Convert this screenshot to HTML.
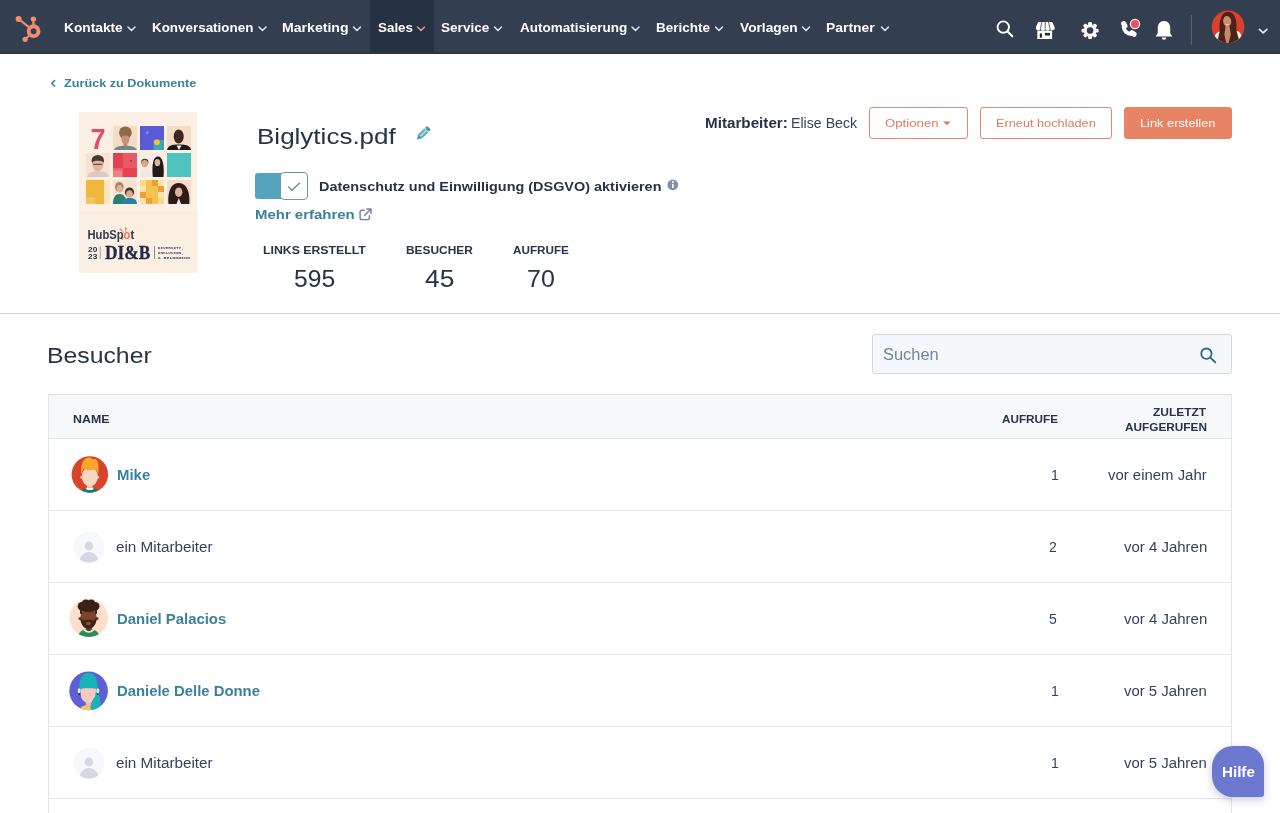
<!DOCTYPE html>
<html lang="de">
<head>
<meta charset="utf-8">
<title>Biglytics.pdf</title>
<style>
*{box-sizing:border-box;margin:0;padding:0}
html,body{width:1280px;height:813px;overflow:hidden;background:#fff}
body{font-family:"Liberation Sans",sans-serif;color:#2d3e50;position:relative}
.t{position:absolute;white-space:nowrap;z-index:5;will-change:transform;transform-origin:0 50%}
.a{position:absolute}
svg{position:absolute;overflow:visible}
.nav{left:0;top:0;width:1280px;height:54px;background:#333f50}
.act{left:370px;top:0;width:64px;height:54px;background:#263243}
.btn{top:107px;height:32px;border:1px solid #e2896d;border-radius:3px;background:#fff}
.line{height:1px;background:#e2e5ea}
</style>
</head>
<body>
<!-- NAV -->
<div class="a nav"></div>
<div class="a act"></div>
<div class="a" style="left:0;top:52px;width:1280px;height:2px;background:#2c3643"></div>
<svg id="logo" style="left:0;top:0" width="60" height="54" viewBox="0 0 60 54">
  <g stroke="#f28e6e" fill="none" stroke-linecap="round">
    <circle cx="33.6" cy="31.2" r="4.9" stroke-width="3.9"/>
    <line x1="33.4" y1="19.5" x2="33.4" y2="25" stroke-width="2.2"/>
    <line x1="18.8" y1="19" x2="29.5" y2="27.6" stroke-width="2.2"/>
    <line x1="25.2" y1="39.2" x2="29.6" y2="35.2" stroke-width="2.2"/>
  </g>
  <g fill="#f28e6e"><circle cx="33.4" cy="19.1" r="2.7"/><circle cx="18.6" cy="18.9" r="3"/><circle cx="25.1" cy="39.3" r="2.6"/></g>
</svg>
<svg id="chevs" style="left:0;top:0" width="1280" height="54" viewBox="0 0 1280 54" fill="none" stroke="#dfe8f2" stroke-width="1.5" stroke-linecap="round" stroke-linejoin="round">
  <path d="M128 27l3.5 3.5 3.5-3.5"/>
  <path d="M259 27l3.5 3.5 3.5-3.5"/>
  <path d="M353.5 27l3.5 3.5 3.5-3.5"/>
  <path d="M417.500 27l3.5 3.5 3.5-3.5" stroke="#d89c92"/>
  <path d="M494.500 27l3.5 3.500 3.5-3.5"/>
  <path d="M632 27l3.500 3.5 3.5-3.5"/>
  <path d="M715.500 27l3.500 3.500 3.500-3.500"/>
  <path d="M802.500 27l3.500 3.50 3.50-3.500"/>
  <path d="M881.500 27l3.50 3.50 3.50-3.50"/>
  <path d="M1259.500 29.300l3.700 3.600 3.700-3.600" stroke-width="1.700"/>
</svg>
<svg id="navicons" style="left:0;top:0" width="1280" height="54" viewBox="0 0 1280 54">
  <!-- search -->
  <circle cx="1003.300" cy="27.100" r="5.700" fill="none" stroke="#fff" stroke-width="1.900"/>
  <line x1="1007.600" y1="31.500" x2="1012.300" y2="36.300" stroke="#fff" stroke-width="2.100" stroke-linecap="round"/>
  <!-- marketplace -->
  <g fill="#fff">
    <path d="M1038.200 22h14l2.500 5.300a2.300 2.300 0 0 1-4.700 1 2.300 2.300 0 0 1-4.700 0 2.300 2.300 0 0 1-4.700 0 2.300 2.300 0 0 1-4.700-1z"/>
    <rect x="1037.300" y="30.600" width="14.800" height="8.400"/>
  </g>
  <g stroke="#333f50" stroke-width="0.800"><line x1="1041.900" y1="22" x2="1040.500" y2="28.500"/><line x1="1045.200" y1="22" x2="1045.200" y2="28.500"/><line x1="1048.500" y1="22" x2="1049.900" y2="28.500"/></g>
  <rect x="1039.800" y="33.400" width="2.200" height="4.300" fill="#1e2a36"/>
  <rect x="1044.900" y="32.900" width="5.100" height="2.600" fill="#1e2a36"/>
  <!-- gear -->
  <g transform="translate(1090.100 30.600)" fill="#fff">
    <g id="teeth">
      <rect x="-1.900" y="-8.500" width="3.800" height="17" rx="1.200"/>
      <rect x="-1.900" y="-8.500" width="3.800" height="17" rx="1.200" transform="rotate(45)"/>
      <rect x="-1.900" y="-8.500" width="3.800" height="17" rx="1.200" transform="rotate(90)"/>
      <rect x="-1.900" y="-8.500" width="3.800" height="17" rx="1.200" transform="rotate(135)"/>
    </g>
    <circle r="6.300"/>
    <circle r="3.300" fill="#333f50"/>
  </g>
  <!-- phone -->
  <g stroke="#fff" fill="none" stroke-linecap="round">
    <path d="M1123.600 26.500Q1124.200 33.200 1131.200 34.100" stroke-width="3.700"/>
    <path d="M1123.700 23.600L1124.900 26" stroke-width="5.200"/>
    <path d="M1132 32.800L1134 34.200" stroke-width="5.200"/>
  </g>
  <circle cx="1135" cy="23.950" r="6.300" fill="#333f50"/>
  <circle cx="1135" cy="23.950" r="4.600" fill="#e8525c" stroke="#fbe9e9" stroke-width="1.300"/>
  <!-- bell -->
  <g fill="#fff">
    <path d="M1164 21c-4 0-6.200 3-6.200 6.800v4.400c0 1.300-.6 2.300-1.700 3.200-.5.400-.3 1.100.4 1.100h15c.7 0 .9-.7.400-1.100-1.100-.9-1.700-1.900-1.700-3.200v-4.400c0-3.800-2.200-6.800-6.200-6.800z"/>
    <path d="M1161.700 37.400h4.600a2.300 2.300 0 0 1-4.600 0z"/>
  </g>
  <line x1="1191.400" y1="15" x2="1191.400" y2="44.600" stroke="#56687c" stroke-width="1"/>
  <!-- avatar -->
  <clipPath id="uc"><circle cx="1228.100" cy="26.800" r="16.300"/></clipPath>
  <g clip-path="url(#uc)">
    <rect x="1211" y="10" width="34" height="34" fill="#dc3f2a"/>
    <path d="M1213.500 44c0-8 2.500-12 6.500-12.500l3 1v11.500z" fill="#f6ece6"/>
    <path d="M1242.500 44c0-8-2-12.500-5.500-13l-3.500 1.500v11.500z" fill="#f6ece6"/>
    <path d="M1218.500 44c-1.800-5 1-9 1.200-14-.8-9 2-18.300 8.100-18.300 6.500 0 9.500 8 8.500 16.500-.3 5 4 10 2.200 15.800z" fill="#4d211b"/>
    <path d="M1225.600 25.500h3.800l1.400 9-2.400 9.500h-2l-2-9.500z" fill="#c48a68"/>
    <ellipse cx="1227.200" cy="21.300" rx="4.100" ry="5.300" fill="#c98d68" transform="rotate(-8 1227.200 21.300)"/>
    <path d="M1223 19c1.200-3.800 5.500-5.500 8.800-2-.8-4.500-8-5.500-8.800 2z" fill="#4a201b"/>
    <path d="M1224.800 23.300q2.400 2.200 4.900.2q-2 3.600-4.900-.2z" fill="#fbeee8"/>
  </g>
</svg>

<!-- back chevron -->
<svg style="left:0;top:60px" width="100" height="40" viewBox="0 60 100 40" fill="none" stroke="#3b819b" stroke-width="1.500" stroke-linecap="round" stroke-linejoin="round"><path d="M54.600 80.600l-2.800 2.800 2.800 2.800"/></svg>

<!-- THUMBNAIL -->
<svg id="thumb" style="left:79px;top:112px;will-change:transform" width="119" height="161" viewBox="0 0 119 161">
  <rect width="118.500" height="161" fill="#fbf0e3"/>
  <rect y="100" width="118.500" height="61" fill="#fbefe4"/>
  <rect y="100.500" width="118.500" height="0.800" fill="#f6e8da"/>
  <!-- row 1 -->
  <text x="11.600" y="37" font-family="Liberation Sans, sans-serif" font-weight="700" font-size="30" fill="#e24e66" textLength="15" lengthAdjust="spacingAndGlyphs">7</text>
  <rect x="34" y="14" width="24" height="24" fill="#f6dcc5"/>
  <clipPath id="c12"><rect x="34" y="14" width="24" height="24"/></clipPath>
  <g clip-path="url(#c12)"><ellipse cx="46.400" cy="20.800" rx="6.400" ry="6.300" fill="#8d6b45"/><path d="M35 38c1-3 5-4.200 11.400-4.200s10.400 1.200 11.400 4.200z" fill="#6b8a90"/><rect x="44.600" y="30" width="3.600" height="4.500" fill="#b98463"/><ellipse cx="46.400" cy="27.200" rx="4" ry="5.200" fill="#c69474"/><path d="M42.200 25c.5-3 3-4.600 5.800-3.600 1.800.6 2.700 2 2.700 3.800-1.500-2-5.500-2.600-8.500-.2z" fill="#8d6b45"/></g>
  <rect x="61" y="14" width="24" height="24" fill="#5a5bd4"/>
  <rect x="74.500" y="28" width="10.500" height="10" fill="#3fa6b6"/><circle cx="78" cy="30.200" r="2.900" fill="#f0c23e"/><rect x="67" y="19.500" width="2.500" height="2.500" fill="#8f86ea"/>
  <rect x="88" y="14" width="24" height="24" fill="#f6dcc5"/>
  <clipPath id="c14"><rect x="88" y="14" width="24" height="24"/></clipPath>
  <g clip-path="url(#c14)"><ellipse cx="99.700" cy="24.500" rx="5" ry="7" fill="#3e271f"/><path d="M88 38c1-4.500 5-5.500 12-5.500s11 1 12 5.500z" fill="#1d1a1c"/><path d="M97.500 33.500l2.500 4.500 2.500-4.500z" fill="#f3eee9"/></g>
  <!-- row 2 -->
  <rect x="7" y="41" width="24" height="24" fill="#f5e3d3"/>
  <clipPath id="c21"><rect x="7" y="41" width="24" height="24"/></clipPath>
  <g clip-path="url(#c21)"><path d="M8 65c1-4 5-6 11-6s10 2 11 6z" fill="#dcc9c7"/><ellipse cx="18.800" cy="48.500" rx="6.200" ry="5.600" fill="#4a3830"/><ellipse cx="18.800" cy="52.600" rx="5.500" ry="6.700" fill="#e3b49b"/><path d="M13.200 50c1-3.500 4-5 7-4.500 2.500.5 4 2 4.300 4.500-3-1.800-8-1.800-11.300 0z" fill="#4a3830"/><rect x="14.200" y="51.800" width="9.200" height="1.100" fill="#5a453c"/></g>
  <rect x="34" y="41" width="24" height="24" fill="#e5414f"/>
  <rect x="44" y="41" width="14" height="15" fill="#e95a69"/><rect x="34" y="56" width="10" height="9" fill="#ea6270"/><rect x="34" y="58.500" width="9" height="6.500" fill="#ee808a"/><circle cx="52" cy="49" r="0.900" fill="#a02848"/>
  <rect x="61" y="41" width="24" height="24" fill="#f7ede4"/>
  <clipPath id="c23"><rect x="61" y="41" width="24" height="24"/></clipPath>
  <g clip-path="url(#c23)"><path d="M61 65c0-6 2.500-9 6-9s6 3 6 9z" fill="#f1e9e2"/><ellipse cx="65.800" cy="50" rx="3.600" ry="3.300" fill="#5a3b2a"/><ellipse cx="65.800" cy="51.600" rx="3.200" ry="3.600" fill="#dba98d"/><path d="M73.800 65c-.8-8-.8-20.500 5-20.500s6.500 12.500 5.700 20.500z" fill="#231a1b"/><ellipse cx="78.400" cy="50.600" rx="2.800" ry="3.700" fill="#e2b39b"/></g>
  <rect x="88" y="41" width="24" height="24" fill="#4fc3bf"/>
  <!-- row 3 -->
  <rect x="7" y="68" width="24" height="24" fill="#f0b73b"/><rect x="25" y="68" width="6" height="24" fill="#fae6bf"/><rect x="7" y="85.500" width="9.500" height="6.500" fill="#f3c55e"/>
  <rect x="34" y="68" width="24" height="24" fill="#f4e3d3"/>
  <clipPath id="c32"><rect x="34" y="68" width="24" height="24"/></clipPath>
  <g clip-path="url(#c32)"><path d="M34 92c0-7 2.500-10 6.500-10s7 3 7 10z" fill="#2f7f70"/><ellipse cx="40.300" cy="75" rx="4.300" ry="5" fill="#a98358"/><ellipse cx="40.600" cy="76.800" rx="3.100" ry="3.800" fill="#e2b199"/><path d="M43 92c0-4.500 3.500-6 7.500-6s7.500 1.500 7.500 6z" fill="#2d7fa8"/><ellipse cx="50.500" cy="80.200" rx="4.600" ry="4.800" fill="#4a3024"/><ellipse cx="50.500" cy="82" rx="3.300" ry="3.800" fill="#deaa92"/></g>
  <rect x="61" y="68" width="24" height="24" fill="#f9e3a8"/>
  <g fill="#f5c14c"><rect x="67" y="68" width="12" height="12"/><rect x="67" y="80" width="12" height="6"/><rect x="73" y="86" width="6" height="6"/></g>
  <g fill="#f0a032"><rect x="73" y="68" width="6" height="6"/><rect x="79" y="74" width="6" height="6"/><rect x="61" y="80" width="6" height="6"/><rect x="67" y="86" width="6" height="6"/></g>
  <rect x="61" y="68" width="6" height="6" fill="#f7d98a"/><rect x="79" y="86" width="6" height="6" fill="#f7d98a"/>
  <rect x="88" y="68" width="24" height="24" fill="#f6dcc5"/>
  <clipPath id="c34"><rect x="88" y="68" width="24" height="24"/></clipPath>
  <g clip-path="url(#c34)"><path d="M89.500 92c-1-9 1-21 10.200-21s11.500 12 10.500 21z" fill="#2b1b19"/><ellipse cx="99.700" cy="80.200" rx="3.700" ry="4.800" fill="#e0b098"/><path d="M97.500 92l2.300-6 2.300 6z" fill="#f0e8e2"/></g>
  <!-- branding -->
  <text x="8.500" y="126.500" font-family="Liberation Sans, sans-serif" font-weight="700" font-size="12.200" fill="#2f3a4e" textLength="46.700" lengthAdjust="spacingAndGlyphs">HubSp<tspan fill="#f2744f">o</tspan>t</text>
  <g stroke="#f2744f" stroke-width="0.900" fill="none" stroke-linecap="round"><path d="M46.900 119.600v-2.600M44.900 120.500l-3-2.600M45.200 125.200l-1.600 1.700"/></g>
  <g fill="#f2744f"><circle cx="46.900" cy="116.600" r="1"/><circle cx="41.600" cy="117.500" r="1"/><circle cx="43.400" cy="127.200" r="0.800"/></g>
  <g font-family="Liberation Sans, sans-serif" font-weight="700" font-size="7.800" fill="#27304a"><text x="9" y="139.900" textLength="9.300" lengthAdjust="spacingAndGlyphs">20</text><text x="9" y="147.200" textLength="9.300" lengthAdjust="spacingAndGlyphs">23</text></g>
  <rect x="20.800" y="134.200" width="0.800" height="13" fill="#8a8a96"/>
  <text x="26" y="147.200" font-family="Liberation Serif, serif" font-weight="700" font-size="19.700" fill="#222a45" stroke="#222a45" stroke-width="0.300" textLength="45.300" lengthAdjust="spacingAndGlyphs">DI&amp;B</text>
  <rect x="75.200" y="134.200" width="0.800" height="13" fill="#6a6f80"/>
  <g font-family="Liberation Mono, monospace" font-weight="700" font-size="4" fill="#4a5068"><text x="78.800" y="137.200" textLength="26" lengthAdjust="spacingAndGlyphs">DIVERSITY,</text><text x="78.800" y="142.200" textLength="26" lengthAdjust="spacingAndGlyphs">INCLUSION,</text><text x="78.800" y="147.200" textLength="32" lengthAdjust="spacingAndGlyphs">&amp; BELONGING</text></g>
</svg>

<!-- pencil -->
<svg style="left:408px;top:120px" width="30" height="26" viewBox="408 120 30 26">
  <g transform="translate(423 133.600) rotate(46)"><rect x="-2.800" y="-8.300" width="5.600" height="3.200" rx="1.400" fill="#4f93ad"/><rect x="-2.800" y="-4.600" width="5.600" height="8.400" fill="#5ea6c3"/><rect x="-1" y="-4.600" width="2" height="8.400" fill="#a5d9ea"/><path d="M-2.800 3.800h5.600l-2.800 4.700z" fill="#4f93ad"/></g>
</svg>

<!-- buttons -->
<div class="a btn" style="left:869px;width:99px"></div>
<div class="a btn" style="left:980px;width:132px"></div>
<div class="a btn" style="left:1124px;width:108px;background:#e88466;border-color:#e88466"></div>
<svg style="left:943px;top:121px" width="8" height="5" viewBox="0 0 8 5"><path d="M0.300 0.500h7.200l-3.600 3.800z" fill="#d9785c"/></svg>

<!-- toggle -->
<div class="a" style="left:255px;top:173px;width:52px;height:25.500px;background:#55a3bd;border-radius:3px"></div>
<div class="a" style="left:280px;top:172px;width:28px;height:28px;background:#fff;border:1px solid #6d9aa3;border-radius:4px"></div>
<svg style="left:286px;top:180px" width="16" height="14" viewBox="0 0 16 14" fill="none" stroke="#4f8593" stroke-width="1.300" stroke-linecap="round" stroke-linejoin="round"><path d="M2.700 6.900l3.300 3.500 7.300-7.200"/></svg>
<!-- info icon -->
<svg style="left:667px;top:179px" width="12" height="12" viewBox="0 0 12 12"><circle cx="5.800" cy="5.800" r="5.400" fill="#7c91b0"/><rect x="5" y="4.900" width="1.700" height="4" fill="#fff"/><circle cx="5.850" cy="3" r="1" fill="#fff"/></svg>
<!-- external link -->
<svg style="left:359px;top:208px" width="13" height="13" viewBox="0 0 13 13" fill="none" stroke="#6c80a0" stroke-width="1.400" stroke-linecap="round" stroke-linejoin="round"><path d="M5.200 2.300H2.600a1.500 1.500 0 0 0-1.500 1.500v6.300a1.500 1.500 0 0 0 1.500 1.500h6.300a1.500 1.500 0 0 0 1.500-1.500V7.700"/><path d="M7.800 1h4.200v4.200M12 1L5.700 7.300"/></svg>

<div class="a" style="left:0;top:313px;width:1280px;height:1px;background:#d3d9e0"></div>

<!-- search -->
<div class="a" style="left:872px;top:334px;width:360px;height:40px;background:#f5f8fa;border:1px solid #d0d8e0;border-radius:3px"></div>
<svg style="left:1199px;top:347px" width="19" height="18" viewBox="0 0 19 18" fill="none" stroke="#2e6b80" stroke-width="1.800" stroke-linecap="round"><circle cx="7.400" cy="6.650" r="5.150"/><path d="M11.300 10.500l5 4.900"/></svg>

<!-- table -->
<div class="a" style="left:48px;top:394px;width:1184px;height:430px;border:1px solid #e1e5ea;border-bottom:0"></div>
<div class="a" style="left:49px;top:395px;width:1182px;height:43px;background:#f6f8fa"></div>
<div class="a line" style="left:49px;top:438px;width:1182px"></div>
<div class="a line" style="left:49px;top:510px;width:1182px"></div>
<div class="a line" style="left:49px;top:582px;width:1182px"></div>
<div class="a line" style="left:49px;top:654px;width:1182px"></div>
<div class="a line" style="left:49px;top:726px;width:1182px"></div>
<div class="a line" style="left:49px;top:798px;width:1182px"></div>

<!-- avatars -->
<svg style="left:69px;top:455px" width="42" height="40" viewBox="69 455 42 40">
  <clipPath id="a1"><circle cx="89.850" cy="474.450" r="18.250"/></clipPath>
  <g clip-path="url(#a1)"><rect x="70" y="455" width="40" height="40" fill="#d8432a"/>
  <path d="M81.500 494C81.500 490 84 488 86.500 487.800L93 487.800C95.500 488 98.500 490 98.500 494z" fill="#127f7c"/>
  <rect x="87.200" y="482" width="5.200" height="6.800" rx="1" fill="#f3bfa3"/>
  <ellipse cx="89.800" cy="488.600" rx="3.700" ry="1.500" fill="#f7f3ee"/>
  <rect x="87.400" y="484" width="4.800" height="4" fill="#f3bfa3"/>
  <circle cx="81.600" cy="477.200" r="1.300" fill="#f8ccb5"/><circle cx="98" cy="477.200" r="1.300" fill="#f8ccb5"/>
  <ellipse cx="89.800" cy="476.600" rx="8.100" ry="9.800" fill="#fbd6c1"/>
  <path d="M81.500 475C80.300 466.500 82 458 89 457.600C90.600 457.500 91.900 458.100 92.700 459.700C93.700 458.600 95.700 458.700 96.900 460.300C98.700 462.600 98.900 468.500 98.100 475C97.400 472 96.600 470 95.600 469.100C92 470.800 86 470.700 83.600 468.600C82.500 470.200 82 472.500 81.500 475z" fill="#f9a72d"/></g>
</svg>
<svg style="left:69px;top:527px" width="42" height="40" viewBox="69 527 42 40">
  <clipPath id="a2"><circle cx="89" cy="547" r="15.600"/></clipPath>
  <circle cx="89" cy="547" r="15.600" fill="#f7f8fb"/>
  <g clip-path="url(#a2)" fill="#d3d8e3"><circle cx="89" cy="546" r="4.400"/><path d="M79.500 563c0-7 4-11 9.500-11s9.500 4 9.500 11z"/></g>
</svg>
<svg style="left:68px;top:597px" width="42" height="42" viewBox="68 597 42 42">
  <clipPath id="a3"><circle cx="88.800" cy="617.800" r="19.200"/></clipPath>
  <g clip-path="url(#a3)"><rect x="68" y="597" width="42" height="42" fill="#fddfcd"/>
  <path d="M77.500 639C78 633.500 81 630 85 629.500L92.500 629.500C96.500 630 99.500 633.500 100 639z" fill="#2f8a55"/>
  <rect x="85.800" y="623" width="6" height="8" rx="2" fill="#6a3820"/>
  <path d="M83.800 629.600Q88.800 634.400 93.800 629.600" stroke="#e3f2db" stroke-width="1.500" fill="none"/>
  <circle cx="80.100" cy="618.600" r="1.700" fill="#7a4227"/><circle cx="96.900" cy="618.600" r="1.700" fill="#7a4227"/>
  <ellipse cx="88.500" cy="618" rx="8.200" ry="10.400" fill="#7d4429"/>
  <path d="M80.400 616.500C80.400 625 84 628.800 88.500 628.800C93 628.800 96.600 625 96.600 616.500C95.600 620 93 621 91.500 620.200Q88.500 618.600 85.500 620.200C84 621 81.400 620 80.400 616.500z" fill="#40241a"/>
  <ellipse cx="88.500" cy="623.500" rx="2.400" ry="1.700" fill="#8a5233"/>
  <g fill="#3a2116"><circle cx="82" cy="606.200" r="4.300"/><circle cx="85.800" cy="603.800" r="4.300"/><circle cx="91.200" cy="603.800" r="4.300"/><circle cx="95.200" cy="606.200" r="4.300"/><ellipse cx="88.500" cy="607.500" rx="8.500" ry="4.600"/><rect x="80" y="606" width="2.200" height="8" rx="1"/><rect x="94.800" y="606" width="2.200" height="8" rx="1"/></g></g>
</svg>
<svg style="left:68px;top:670px" width="42" height="42" viewBox="68 670 42 42">
  <clipPath id="a4"><circle cx="88.600" cy="690.900" r="19.300"/></clipPath>
  <g clip-path="url(#a4)"><rect x="68" y="670" width="42" height="42" fill="#5c5fd6"/>
  <path d="M79.500 711.500C80 707 83 705.300 87 705.300L90.500 705.300L91 711.500z" fill="#f1c95d"/>
  <rect x="85.800" y="699" width="5.800" height="7.500" rx="1.500" fill="#f4b6ab"/>
  <path d="M80.800 686h15.400v8.500c0 5-3.500 8.300-7.700 8.300s-7.700-3.300-7.700-8.300z" fill="#f9c9c1"/>
  <path d="M79.300 689.500C78.800 679 82 673 88.500 673C95 673 98.200 679 97.700 689.500C95 687.800 82 687.800 79.300 689.500z" fill="#17b3b5"/>
  <path d="M96.300 689C99.500 694.500 102 702.500 99.500 710.500L91.200 711C89.600 706.500 92 700 95 696.500z" fill="#17b3b5"/>
  <rect x="77.800" y="688.600" width="2.700" height="4.400" rx="1.200" fill="#eef0ff"/><rect x="96.500" y="688.600" width="2.700" height="4.400" rx="1.200" fill="#eef0ff"/>
  <circle cx="79.400" cy="694.400" r="0.800" fill="#1f2a5a"/><circle cx="97.600" cy="694.400" r="0.800" fill="#1f2a5a"/></g>
</svg>
<svg style="left:69px;top:743px" width="42" height="40" viewBox="69 743 42 40">
  <clipPath id="a5"><circle cx="89" cy="763" r="15.600"/></clipPath>
  <circle cx="89" cy="763" r="15.600" fill="#f7f8fb"/>
  <g clip-path="url(#a5)" fill="#d3d8e3"><circle cx="89" cy="762" r="4.400"/><path d="M79.500 779c0-7 4-11 9.500-11s9.500 4 9.500 11z"/></g>
</svg>

<!-- help -->
<div class="a" style="left:1212px;top:746px;width:52px;height:50.500px;background:#6c77d0;border-radius:21px 19px 3px 21px;box-shadow:0 3px 8px rgba(70,70,130,.28);z-index:4"></div>

<span class="t" id="n1" style="left:64.00px;top:21.00px;font-size:13px;line-height:13px;font-weight:700;color:#fff;transform:scaleX(1.0557)">Kontakte</span>
<span class="t" id="n2" style="left:152.00px;top:21.00px;font-size:13px;line-height:13px;font-weight:700;color:#fff;transform:scaleX(1.0313)">Konversationen</span>
<span class="t" id="n3" style="left:282.00px;top:21.00px;font-size:13px;line-height:13px;font-weight:700;color:#fff;transform:scaleX(1.0835)">Marketing</span>
<span class="t" id="n4" style="left:378.00px;top:21.00px;font-size:13px;line-height:13px;font-weight:700;color:#fff;transform:scaleX(1.0312)">Sales</span>
<span class="t" id="n5" style="left:441.00px;top:21.00px;font-size:13px;line-height:13px;font-weight:700;color:#fff;transform:scaleX(1.0444)">Service</span>
<span class="t" id="n6" style="left:520.00px;top:21.00px;font-size:13px;line-height:13px;font-weight:700;color:#fff;transform:scaleX(1.0393)">Automatisierung</span>
<span class="t" id="n7" style="left:656.00px;top:21.00px;font-size:13px;line-height:13px;font-weight:700;color:#fff;transform:scaleX(1.0402)">Berichte</span>
<span class="t" id="n8" style="left:740.00px;top:21.00px;font-size:13px;line-height:13px;font-weight:700;color:#fff;transform:scaleX(1.0556)">Vorlagen</span>
<span class="t" id="n9" style="left:826.00px;top:21.00px;font-size:13px;line-height:13px;font-weight:700;color:#fff;transform:scaleX(1.0691)">Partner</span>
<span class="t" id="back" style="left:64.00px;top:77.00px;font-size:11.7px;line-height:11.7px;font-weight:700;color:#3b819b;transform:scaleX(1.0836)">Zurück zu Dokumente</span>
<span class="t" id="title" style="left:257.00px;top:126.00px;font-size:22.5px;line-height:22.5px;font-weight:400;color:#263446;transform:scaleX(1.1559)">Biglytics.pdf</span>
<span class="t" id="mit" style="left:705.00px;top:116.00px;font-size:14px;line-height:14px;font-weight:700;color:#263446;transform:scaleX(1.0865)">Mitarbeiter:</span>
<span class="t" id="eb" style="left:791.00px;top:116.00px;font-size:14px;line-height:14px;font-weight:400;color:#33445a;transform:scaleX(1.0126)">Elise Beck</span>
<span class="t" id="b1" style="left:885.00px;top:117.00px;font-size:11.7px;line-height:11.7px;font-weight:400;color:#da7c60;transform:scaleX(1.1304)">Optionen</span>
<span class="t" id="b2" style="left:996.00px;top:117.00px;font-size:11.7px;line-height:11.7px;font-weight:400;color:#da7c60;transform:scaleX(1.0889)">Erneut hochladen</span>
<span class="t" id="b3" style="left:1140.00px;top:117.00px;font-size:11.7px;line-height:11.7px;font-weight:400;color:#fff;transform:scaleX(1.0957)">Link erstellen</span>
<span class="t" id="ds" style="left:319.00px;top:180.00px;font-size:13.5px;line-height:13.5px;font-weight:700;color:#263446;transform:scaleX(1.0692)">Datenschutz und Einwilligung (DSGVO) aktivieren</span>
<span class="t" id="mehr" style="left:255.00px;top:208.00px;font-size:13.5px;line-height:13.5px;font-weight:700;color:#3b819b;transform:scaleX(1.1069)">Mehr erfahren</span>
<span class="t" id="s1" style="left:263.00px;top:244.00px;font-size:11.7px;line-height:11.7px;font-weight:700;color:#263446;transform:scaleX(1.0515)">LINKS ERSTELLT</span>
<span class="t" id="s2" style="left:406.00px;top:244.00px;font-size:11.7px;line-height:11.7px;font-weight:700;color:#263446;transform:scaleX(1.0188)">BESUCHER</span>
<span class="t" id="s3" style="left:513.00px;top:244.00px;font-size:11.7px;line-height:11.7px;font-weight:700;color:#263446;transform:scaleX(0.9965)">AUFRUFE</span>
<span class="t" id="v1" style="left:294.00px;top:267.00px;font-size:24px;line-height:24px;font-weight:400;color:#263446;transform:scaleX(1.0263)">595</span>
<span class="t" id="v2" style="left:425.00px;top:267.00px;font-size:24px;line-height:24px;font-weight:400;color:#263446;transform:scaleX(1.0972)">45</span>
<span class="t" id="v3" style="left:527.00px;top:267.00px;font-size:24px;line-height:24px;font-weight:400;color:#263446;transform:scaleX(1.0408)">70</span>
<span class="t" id="h2" style="left:47.00px;top:345.00px;font-size:22.5px;line-height:22.5px;font-weight:400;color:#263446;transform:scaleX(1.1011)">Besucher</span>
<span class="t" id="su" style="left:883.00px;top:347.00px;font-size:16px;line-height:16px;font-weight:400;color:#738699;transform:scaleX(1.0271)">Suchen</span>
<span class="t" id="th1" style="left:73.00px;top:413.00px;font-size:11.7px;line-height:11.7px;font-weight:700;color:#263446;transform:scaleX(1.0611)">NAME</span>
<span class="t" id="th2" style="left:1002.00px;top:413.00px;font-size:11.7px;line-height:11.7px;font-weight:700;color:#263446;transform:scaleX(1.0037)">AUFRUFE</span>
<span class="t" id="th3" style="left:1153.00px;top:406.00px;font-size:11.7px;line-height:11.7px;font-weight:700;color:#263446;transform:scaleX(1.0232)">ZULETZT</span>
<span class="t" id="th4" style="left:1125.00px;top:421.00px;font-size:11.7px;line-height:11.7px;font-weight:700;color:#263446;transform:scaleX(1.0101)">AUFGERUFEN</span>
<span class="t" id="r1n" style="left:117.00px;top:468.00px;font-size:14px;line-height:14px;font-weight:700;color:#3b819b;transform:scaleX(1.0667)">Mike</span>
<span class="t" id="r2n" style="left:116.00px;top:540.00px;font-size:14px;line-height:14px;font-weight:400;color:#33445a;transform:scaleX(1.0897)">ein Mitarbeiter</span>
<span class="t" id="r3n" style="left:117.00px;top:612.00px;font-size:14px;line-height:14px;font-weight:700;color:#3b819b;transform:scaleX(1.0634)">Daniel Palacios</span>
<span class="t" id="r4n" style="left:117.00px;top:684.00px;font-size:14px;line-height:14px;font-weight:700;color:#3b819b;transform:scaleX(1.0617)">Daniele Delle Donne</span>
<span class="t" id="r5n" style="left:116.00px;top:756.00px;font-size:14px;line-height:14px;font-weight:400;color:#33445a;transform:scaleX(1.0897)">ein Mitarbeiter</span>
<span class="t" id="r1c" style="left:1051.00px;top:468.00px;font-size:14px;line-height:14px;font-weight:400;color:#33445a;transform:scaleX(1.0000)">1</span>
<span class="t" id="r2c" style="left:1049.00px;top:540.00px;font-size:14px;line-height:14px;font-weight:400;color:#33445a;transform:scaleX(1.0000)">2</span>
<span class="t" id="r3c" style="left:1049.00px;top:612.00px;font-size:14px;line-height:14px;font-weight:400;color:#33445a;transform:scaleX(1.0000)">5</span>
<span class="t" id="r4c" style="left:1051.00px;top:684.00px;font-size:14px;line-height:14px;font-weight:400;color:#33445a;transform:scaleX(1.0000)">1</span>
<span class="t" id="r5c" style="left:1051.00px;top:756.00px;font-size:14px;line-height:14px;font-weight:400;color:#33445a;transform:scaleX(1.0000)">1</span>
<span class="t" id="r1d" style="left:1108.00px;top:468.00px;font-size:14px;line-height:14px;font-weight:400;color:#33445a;transform:scaleX(1.0653)">vor einem Jahr</span>
<span class="t" id="r2d" style="left:1124.00px;top:540.00px;font-size:14px;line-height:14px;font-weight:400;color:#33445a;transform:scaleX(1.0701)">vor 4 Jahren</span>
<span class="t" id="r3d" style="left:1124.00px;top:612.00px;font-size:14px;line-height:14px;font-weight:400;color:#33445a;transform:scaleX(1.0701)">vor 4 Jahren</span>
<span class="t" id="r4d" style="left:1124.00px;top:684.00px;font-size:14px;line-height:14px;font-weight:400;color:#33445a;transform:scaleX(1.0649)">vor 5 Jahren</span>
<span class="t" id="r5d" style="left:1124.00px;top:756.00px;font-size:14px;line-height:14px;font-weight:400;color:#33445a;transform:scaleX(1.0649)">vor 5 Jahren</span>
<span class="t" id="help" style="left:1222.00px;top:765.00px;font-size:14px;line-height:14px;font-weight:700;color:#fff;transform:scaleX(1.0828)">Hilfe</span>
</body>
</html>
